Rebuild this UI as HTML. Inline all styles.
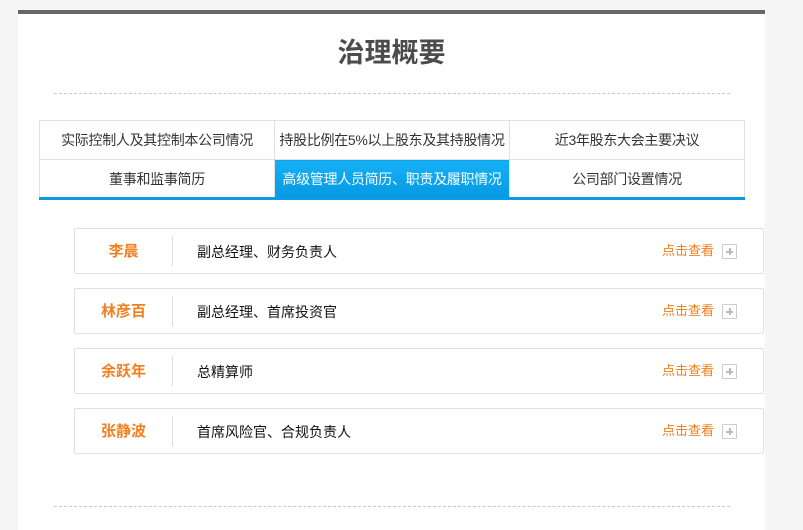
<!DOCTYPE html>
<html><head><meta charset="utf-8"><style>
*{margin:0;padding:0;box-sizing:border-box}
body{width:803px;height:528px;background:#f5f5f5;font-family:"Liberation Sans","Noto Sans CJK SC",sans-serif;position:relative;overflow:hidden}
.panel{position:absolute;left:18px;top:10px;width:747px;height:520px;background:#fff;border-top:4px solid #676767}
.title{position:absolute;left:18px;width:747px;top:34px;text-align:center;font-size:27px;font-weight:bold;color:#4c4c4c;line-height:38px}
.dash{position:absolute;left:54px;width:676px;height:0;border-top:1px dashed #c8c8c8}
table{position:absolute;left:39px;top:120px;width:706px;border-collapse:collapse;table-layout:fixed}
td{border:1px solid #e1e1e1;height:39px;text-align:center;font-size:14px;color:#333;white-space:nowrap;letter-spacing:-0.3px}
td.on{background:linear-gradient(#17b0f5,#0499e3);color:#fff}
.bline{position:absolute;left:39px;top:197px;width:706px;height:3px;background:#0a9be1}
.card{position:absolute;left:74px;width:690px;height:46px;border:1px solid #e0e0e0;border-radius:2px;background:#fff}
.name{position:absolute;left:0;width:97px;top:1px;line-height:44px;text-align:center;color:#f47f1f;font-weight:bold;font-size:15px}
.sep{position:absolute;left:97px;top:7px;width:1px;height:30px;background:#ddd}
.role{position:absolute;left:122px;top:1px;line-height:44px;font-size:14px;color:#111}
.more{position:absolute;left:587px;top:0;line-height:43px;font-size:13px;color:#f47f1f}
.plus{position:absolute;left:647px;top:15px;width:15px;height:15px;border:1px solid #ccc;border-radius:1px}
.plus:before{content:"";position:absolute;left:3px;top:6px;width:7px;height:1px;background:#bbb;border-top:1px solid #bbb}
.plus:after{content:"";position:absolute;left:6px;top:3px;width:1px;height:7px;background:#bbb;border-left:1px solid #bbb}
</style></head><body>
<div class="panel"></div>
<div class="title">治理概要</div>
<div class="dash" style="top:93px"></div>
<table><tr><td>实际控制人及其控制本公司情况</td><td>持股比例在5%以上股东及其持股情况</td><td>近3年股东大会主要决议</td></tr>
<tr><td>董事和监事简历</td><td class="on">高级管理人员简历、职责及履职情况</td><td>公司部门设置情况</td></tr></table>
<div class="bline"></div>
<div class="card" style="top:228px"><div class="name">李晨</div><div class="sep"></div><div class="role">副总经理、财务负责人</div><div class="more">点击查看</div><div class="plus"></div></div>
<div class="card" style="top:288px"><div class="name">林彦百</div><div class="sep"></div><div class="role">副总经理、首席投资官</div><div class="more">点击查看</div><div class="plus"></div></div>
<div class="card" style="top:348px"><div class="name">余跃年</div><div class="sep"></div><div class="role">总精算师</div><div class="more">点击查看</div><div class="plus"></div></div>
<div class="card" style="top:408px"><div class="name">张静波</div><div class="sep"></div><div class="role">首席风险官、合规负责人</div><div class="more">点击查看</div><div class="plus"></div></div>
<div class="dash" style="top:506px"></div>
</body></html>
